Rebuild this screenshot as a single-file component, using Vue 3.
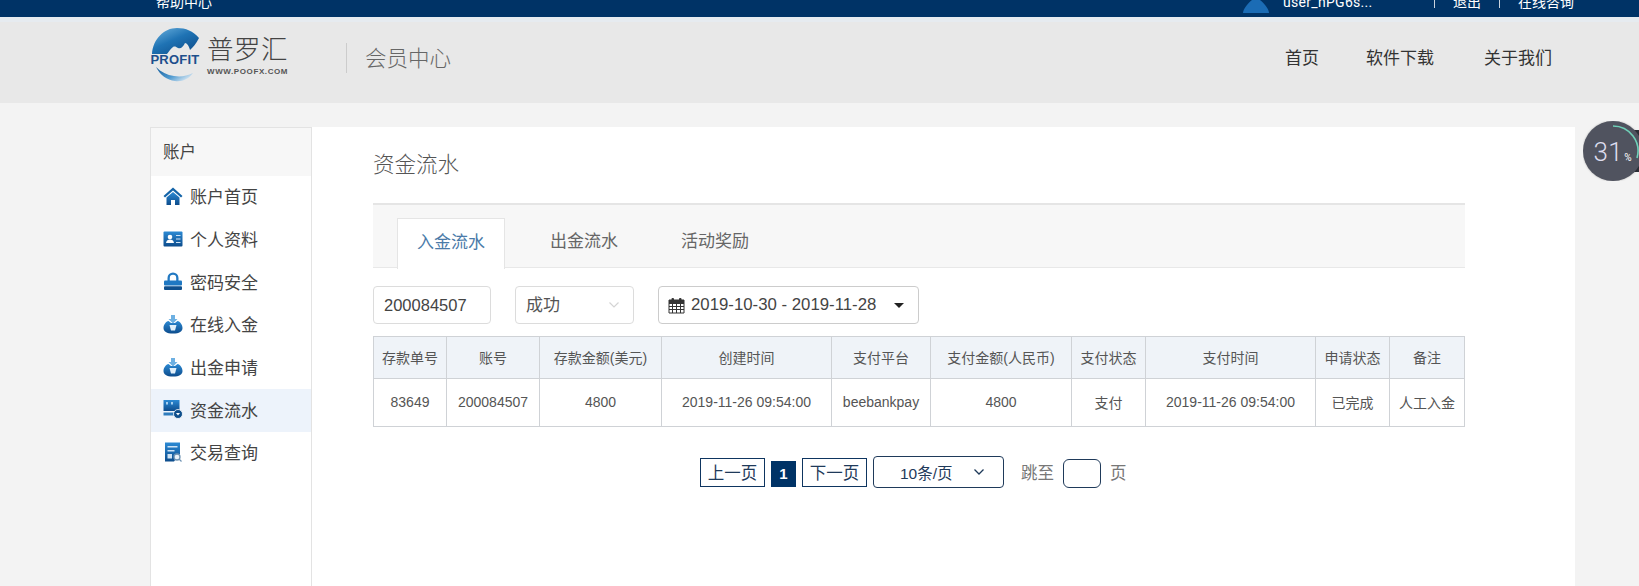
<script setup>
const menu = [
  { label: '账户首页', icon: 'home' },
  { label: '个人资料', icon: 'card' },
  { label: '密码安全', icon: 'lock' },
  { label: '在线入金', icon: 'bag' },
  { label: '出金申请', icon: 'bag' },
  { label: '资金流水', icon: 'flow', active: true },
  { label: '交易查询', icon: 'query' }
]
const columns = [
  { head: '存款单号', cell: '83649', width: 73 },
  { head: '账号', cell: '200084507', width: 93 },
  { head: '存款金额(美元)', cell: '4800', width: 122 },
  { head: '创建时间', cell: '2019-11-26 09:54:00', width: 170 },
  { head: '支付平台', cell: 'beebankpay', width: 99 },
  { head: '支付金额(人民币)', cell: '4800', width: 141 },
  { head: '支付状态', cell: '支付', width: 74 },
  { head: '支付时间', cell: '2019-11-26 09:54:00', width: 170 },
  { head: '申请状态', cell: '已完成', width: 74 },
  { head: '备注', cell: '人工入金', width: 75 }
]
</script>

<template>
  <div class="page">
    <div class="top">
      <span class="help">帮助中心</span>
      <svg class="avatar" width="26" height="13" viewBox="0 0 26 13"><path d="M0 13C0 9 5 3 9 0h8c4 3 9 9 9 13z" fill="#1b6cb5"/></svg>
      <span class="user">user_nPG6s...</span>
      <span class="sep"></span>
      <span class="logout">退出</span>
      <span class="sep"></span>
      <span class="consult">在线咨询</span>
    </div>
    <div class="strip"></div>
    <header class="head">
      <svg class="logo" width="54" height="56" viewBox="0 0 54 56">
        <defs>
          <linearGradient id="g1" x1="0" y1="0" x2="0.8" y2="1"><stop offset="0" stop-color="#6fb4e0"/><stop offset="0.5" stop-color="#1f73b4"/><stop offset="1" stop-color="#0e4f8c"/></linearGradient>
          <linearGradient id="g2" x1="0" y1="0" x2="1" y2="0.6"><stop offset="0" stop-color="#135c9b"/><stop offset="0.6" stop-color="#4f9ad0"/><stop offset="1" stop-color="#cfe2f0"/></linearGradient>
          <linearGradient id="ic" x1="0" y1="0" x2="0" y2="1"><stop offset="0" stop-color="#2c8ad4"/><stop offset="1" stop-color="#0d4c8c"/></linearGradient>
        </defs>
        <path d="M2 27C3 12 14 1 27 1c9 0 16 3 22 10-3 6-6 9-9 12-1-4-3-7-5-7-2 4-4 6-7 5-2-1-3-2-5-1-3 2-4 5-6 7z" fill="url(#g1)"/>
        <path d="M6 40c5 5 11 8 18 9 7 1 13 0 19-3-4 6-11 9-18 8C17 53 10 48 6 40z" fill="url(#g2)"/>
        <text x="0.500" y="37" class="profit">PROFIT</text>
      </svg>
      <div class="brand">
        <span class="brand-cn">普罗汇</span>
        <span class="brand-en">WWW.POOFX.COM</span>
      </div>
      <span class="vline"></span>
      <span class="center">会员中心</span>
      <nav class="nav">
        <a>首页</a>
        <a>软件下载</a>
        <a>关于我们</a>
      </nav>
    </header>

    <div class="body">
      <aside class="side">
        <div class="side-title">账户</div>
        <div v-for="m in menu" :key="m.label" class="side-item" :class="{ on: m.active }">
          <svg class="mi" width="20" height="20" viewBox="0 0 20 20">
            <template v-if="m.icon === 'home'">
              <path d="M10 1.500 0.500 10l1.500 1.500L10 4.500l8 7 1.500-1.500z" fill="#1464a8"/>
              <path d="M3.500 11.500 10 6l6.500 5.500V19h-4.500v-5H8v5H3.500z" fill="url(#ic)"/>
            </template>
            <template v-else-if="m.icon === 'card'">
              <rect x="0.500" y="2.500" width="19" height="15" rx="1" fill="url(#ic)"/>
              <circle cx="7" cy="8" r="2.300" fill="#fff"/>
              <path d="M3 14c.5-3 2-3.500 4-3.500s3.500.5 4 3.500z" fill="#fff"/>
              <path d="M13 6.500h4.500M13 10h4.500M13 13.500h4.500" stroke="#cfe3f5" stroke-width="1.200"/>
            </template>
            <template v-else-if="m.icon === 'lock'">
              <path d="M4.500 10V7a5.500 5.500 0 0 1 11 0v3h-2.300V7a3.200 3.200 0 0 0-6.400 0v3z" fill="#2279c2"/>
              <rect x="1" y="9.500" width="18" height="5" rx="1" fill="#1f78c2"/>
              <rect x="1" y="15.300" width="18" height="3.700" rx="1" fill="#0f4f8c"/>
            </template>
            <template v-else-if="m.icon === 'bag'">
              <path d="M10 19.500c-6.500 0-9.500-2-9.500-5.500 0-3.500 2.500-6.500 5-7L8 9h4l2.500-2c2.500.5 5 3.500 5 7 0 3.500-3 5.500-9.500 5.500z" fill="url(#ic)"/>
              <path d="M8 1h4v4h2.500L10 9.500 5.500 5H8z" fill="#6db0e2"/>
              <path d="M6.500 11h7l-1.500 5.500H8z" fill="#e2f0fa"/>
            </template>
            <template v-else-if="m.icon === 'flow'">
              <path d="M0.500 1h16v11h-16z" fill="url(#ic)"/>
              <path d="M3 3h2v2.500H3zM8 3h2v2.500H8z" fill="#a6d0ef"/>
              <path d="M0.500 13.500h10.500v3H0.500z" fill="#2f7cbd"/>
              <circle cx="15" cy="15" r="4.500" fill="#0f4f8c" stroke="#fff" stroke-width="0.800"/>
              <path d="M13 14l2 2.500 2-2.500z" fill="#fff"/>
            </template>
            <template v-else>
              <path d="M2 0.500h15v11l-6 8H2z" fill="url(#ic)"/>
              <path d="M4.500 4h10v1.500h-10zM4.500 8h7v1.500h-7zM4.500 12h4.500v4.500H4.500z" fill="#cfe3f5"/>
              <circle cx="14" cy="15" r="3" fill="#eaf2f9" stroke="#6f93b3" stroke-width="1.300"/>
              <path d="M16 17l2.500 2.500" stroke="#6f93b3" stroke-width="1.300"/>
            </template>
          </svg>
          <span>{{ m.label }}</span>
        </div>
      </aside>

      <main class="main">
        <h1 class="title">资金流水</h1>
        <div class="tabs">
          <span class="tab active">入金流水</span>
          <span class="tab t2">出金流水</span>
          <span class="tab t3">活动奖励</span>
        </div>
        <div class="filters">
          <div class="box account">200084507</div>
          <div class="box status">
            <span class="status-text">成功</span>
            <svg width="12" height="8" viewBox="0 0 12 8"><path d="M1.500 1.500 6 6l4.500-4.500" fill="none" stroke="#d4d4d4" stroke-width="1.200"/></svg>
          </div>
          <div class="box date">
            <svg width="17" height="17" viewBox="0 0 17 17" class="cal">
              <path d="M1 3h15v13H1zM1 6.500h15M1 9.500h15M1 12.500h15M4.500 6.500V16M8.500 6.500V16M12.500 6.500V16" fill="none" stroke="#333" stroke-width="1"/>
              <rect x="1" y="3" width="15" height="3.500" fill="#333"/>
              <rect x="3.500" y="1" width="2.500" height="3.500" rx="1" fill="#333"/>
              <rect x="11" y="1" width="2.500" height="3.500" rx="1" fill="#333"/>
            </svg>
            <span class="range">2019-10-30 - 2019-11-28</span>
            <span class="caret"></span>
          </div>
        </div>
        <table class="grid">
          <colgroup>
            <col v-for="c in columns" :key="c.head" :style="{ width: c.width + 'px' }" />
          </colgroup>
          <thead>
            <tr><th v-for="c in columns" :key="c.head">{{ c.head }}</th></tr>
          </thead>
          <tbody>
            <tr><td v-for="c in columns" :key="c.head">{{ c.cell }}</td></tr>
          </tbody>
        </table>
        <div class="pager">
          <span class="pg prev">上一页</span>
          <span class="cur">1</span>
          <span class="pg next">下一页</span>
          <span class="size">10条/页
            <svg width="12" height="8" viewBox="0 0 12 8"><path d="M1.500 1.500 6 6l4.500-4.500" fill="none" stroke="#1f3a5a" stroke-width="1.300"/></svg>
          </span>
          <span class="jump">跳至</span>
          <span class="jump-box"></span>
          <span class="jump">页</span>
        </div>
      </main>

      <div class="meter">
        <div class="meter-back"></div>
        <div class="meter-disc">
          <svg class="arc" width="60" height="60" viewBox="0 0 60 60"><path d="M30 5A25 25 0 0 1 54 37" fill="none" stroke="#6fd0b8" stroke-width="1.600"/></svg>
          <span class="num">31</span><span class="pct">%</span>
        </div>
      </div>
    </div>
  </div>
</template>

<style>
html, body { margin: 0; background: #f3f3f3; overflow: hidden; }
</style>

<style scoped>
.page { width: 1639px; height: 586px; overflow: hidden; font-family: "Liberation Sans", "Noto Sans CJK SC", sans-serif; color: #333; }
.top { height: 17px; background: #003366; color: #fff; display: flex; align-items: flex-start; overflow: hidden; font-size: 14px; line-height: 5px; }
.help { margin-left: 156px; }
.avatar { margin-left: 1031px; flex: none; }
.user { margin-left: 14px; width: 91px; font-family: Roboto, sans-serif; font-size: 14px; letter-spacing: 0.3px; }
.sep { width: 1px; height: 8px; background: #c9d3de; margin-left: 60px; }
.logout { margin-left: 18px; width: 28px; }
.logout + .sep { margin-left: 18px; }
.consult { margin-left: 18px; }
.strip { height: 5px; background: #e6ebf0; }
.head { height: 81px; background: #e8e8e8; display: flex; align-items: flex-start; }
.logo { margin: 5px 0 0 150px; flex: none; }
.profit { font: 700 13px "Liberation Sans", sans-serif; fill: #1d4f8c; letter-spacing: 0.2px; }
.brand { margin: 12px 0 0 3px; width: 82px; display: flex; flex-direction: column; }
.brand-cn { font-size: 26.500px; line-height: 32px; color: #444; font-weight: 300; letter-spacing: 0.500px; white-space: nowrap; }
.brand-en { font-size: 8px; font-weight: 700; color: #555; line-height: 9px; letter-spacing: 0.600px; margin-top: 1px; white-space: nowrap; }
.vline { width: 1px; height: 30px; background: #ccc; margin: 21px 0 0 57px; }
.center { margin: 21px 0 0 18px; font-size: 21.500px; line-height: 32px; color: #666; font-weight: 300; }
.nav { margin-left: auto; margin-right: 87px; margin-top: 24px; display: flex; gap: 50px; font-size: 17px; line-height: 26px; color: #333; }
.nav a:nth-child(2) { margin-left: -3px; }
.body { position: relative; display: flex; padding: 24px 0 0 150px; height: 483px; box-sizing: border-box; background: #f3f3f3; }
.side { width: 162px; box-sizing: border-box; border: 1px solid #e3e3e3; border-bottom: 0; background: #fff; flex: none; }
.side-title { height: 47.500px; line-height: 48px; padding-left: 12px; background: #f7f7f7; font-size: 16.500px; color: #444; }
.side-item { height: 42.700px; box-sizing: border-box; padding: 0 0 2px 12px; display: flex; align-items: center; gap: 7px; font-size: 17px; color: #444; }
.side-item.on { background: #edf3fb; }
.mi { flex: none; }
.main { width: 1263px; box-sizing: border-box; background: #fff; padding: 0 110px 0 61px; flex: none; }
.title { margin: 0; font-weight: 300; font-size: 21.500px; line-height: 30px; padding-top: 23px; color: #555; }
.tabs { margin-top: 23px; height: 65px; box-sizing: border-box; border-top: 2px solid #e5e5e5; border-bottom: 1px solid #e8e8e8; background: #f7f7f7; display: flex; position: relative; }
.tab { font-size: 17px; color: #666; line-height: 24px; padding-top: 25px; }
.tab.active { box-sizing: border-box; margin: 13px 0 -1px 24px; width: 108px; height: 51px; border: 1px solid #e5e5e5; border-bottom: 0; background: #fff; color: #4a7aa8; text-align: center; padding-top: 12px; }
.t2 { margin-left: 45px; }
.t3 { margin-left: 63px; }
.filters { display: flex; margin-top: 18px; gap: 24px; }
.box { height: 38px; box-sizing: border-box; border: 1px solid #dcdcdc; border-radius: 4px; display: flex; align-items: center; background: #fff; font-size: 16.500px; color: #444; }
.account { width: 118px; padding-left: 10px; }
.status { width: 119px; padding: 0 13px 0 10px; justify-content: space-between; color: #555; font-size: 17px; }
.status-text { margin-bottom: 3px; }
.date { width: 261px; padding-left: 9px; border-color: #ccc; color: #444; font-size: 16.800px; }
.cal { flex: none; }
.range { margin-left: 6px; white-space: nowrap; }
.caret { margin-left: 18px; border: 5px solid transparent; border-top-color: #222; border-bottom: 0; }
.grid { margin-top: 12px; border-collapse: collapse; table-layout: fixed; width: 1091px; font-size: 14px; color: #555; text-align: center; }
.grid th, .grid td { border: 1px solid #cfd2d6; font-weight: 400; white-space: nowrap; padding: 0; box-sizing: border-box; }
.grid th { height: 42px; background: #eff3f8; font-size: 14px; padding-bottom: 2px; }
.grid td { height: 48px; padding-bottom: 1px; }
.pager { margin-top: 29px; margin-left: 327px; display: flex; align-items: flex-start; font-size: 16.500px; color: #1f3a5a; }
.pg { width: 65px; height: 29px; box-sizing: border-box; border: 1px solid #0e3560; text-align: center; line-height: 29px; }
.prev { margin-top: 2px; }
.cur { width: 25px; height: 26px; margin: 5px 6px 0; background: #003366; color: #fff; font-weight: 700; text-align: center; line-height: 26px; font-size: 15px; }
.next { margin-top: 2px; }
.size { width: 131px; height: 32px; box-sizing: border-box; border: 1px solid #1f3a5a; border-radius: 4px; margin-left: 6px; display: flex; align-items: center; padding: 0 0 0 26px; gap: 20px; font-size: 15.500px; }
.jump { color: #777; line-height: 35px; margin-left: 9px; }
.size + .jump { margin-left: 17px; }
.jump-box { width: 38px; height: 29px; box-sizing: border-box; margin: 3px 0 0 9px; border: 1px solid #1f3a5a; border-radius: 6px; }
.meter { position: absolute; left: 1583px; top: 18px; width: 56px; height: 60px; overflow: hidden; }
.meter-back { position: absolute; left: 30px; top: 9px; width: 40px; height: 42px; background: #2e3138; border-radius: 6px; }
.meter-disc { position: absolute; left: 0; top: 0; width: 60px; height: 60px; border-radius: 50%; background: #50535f; color: #fff; display: flex; align-items: baseline; justify-content: center; line-height: 62px; font-family: Roboto, sans-serif; box-shadow: 0 0 2px rgba(0,0,0,.3); }
.arc { position: absolute; left: 0; top: 0; }
.num { font-size: 26px; font-weight: 300; margin-left: -1px; letter-spacing: 0.5px; color: #dde; }
.pct { font-size: 10px; margin-left: 1px; }
</style>
